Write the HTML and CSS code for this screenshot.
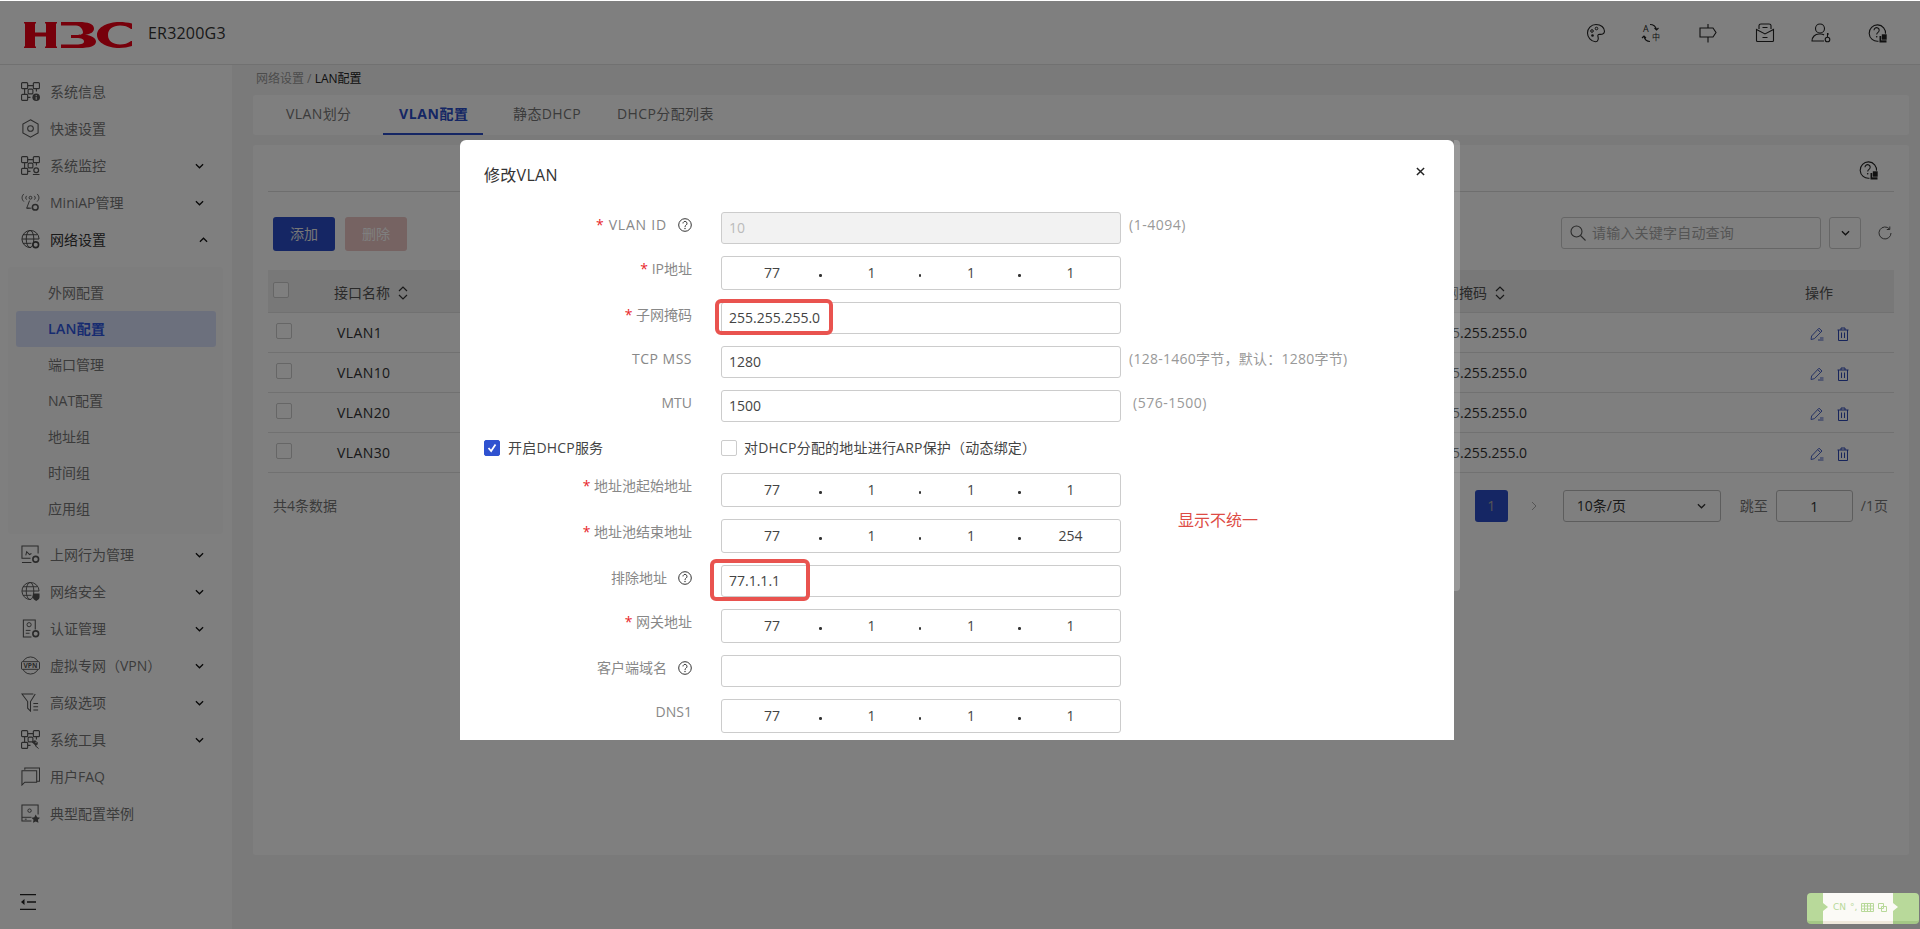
FILE: index.html
```html
<!DOCTYPE html>
<html lang="zh-CN">
<head>
<meta charset="utf-8">
<title>ER3200G3 - LAN配置</title>
<link rel="stylesheet" href="styles.css">
</head>
<body>
<svg class="defs" width="0" height="0" aria-hidden="true">
  <symbol id="grid" viewBox="0 0 20 20"><g fill="none" stroke="currentColor" stroke-width="1.200"><rect x=".6" y=".6" width="6.400" height="6.400" rx="1"/><rect x="13" y=".6" width="6.400" height="6.400" rx="1"/><rect x=".6" y="13" width="6.400" height="6.400" rx="1"/><rect x="7.500" y="7.500" width="5" height="5" rx="1"/><path d="M7 3.800h6M3.800 7v6M16.200 7v3M7 16.200h3"/></g></symbol>
  <symbol id="help" viewBox="0 0 14 14"><circle cx="7" cy="7" r="6.300" fill="none" stroke="currentColor" stroke-width="1"/><path d="M5 5.400a2 2 0 1 1 3.200 1.600c-.8.600-1.200 1-1.200 1.900" fill="none" stroke="currentColor" stroke-width="1"/><circle cx="7" cy="10.500" r=".7" fill="currentColor"/></symbol>
  <symbol id="helpcopy" viewBox="0 0 20 20"><path d="M11.500 18.200a8.200 8.200 0 1 1 7-7" fill="none" stroke="currentColor" stroke-width="1.100"/><path d="M7 7.200a2.600 2.600 0 1 1 4 2.200c-1 .7-1.300 1.100-1.300 2.100" fill="none" stroke="currentColor" stroke-width="1.100"/><circle cx="9.700" cy="13.800" r=".8" fill="currentColor"/><rect x="12.500" y="13" width="7" height="6.500" fill="currentColor"/><rect x="14.500" y="11" width="5.500" height="6" fill="currentColor" stroke="#fff" stroke-width=".6"/></symbol>
  <symbol id="edit" viewBox="0 0 14 14"><path d="M1 12.500l.6-3.500L9 1.200l3 2.800-7.600 7.700z M7.800 2.700l2.800 2.800M8 13h5.500M10 11h3.500" fill="none" stroke="currentColor" stroke-width="1"/></symbol>
  <symbol id="trash" viewBox="0 0 12 14"><path d="M.5 3h11M4 3V1h4v2M1.500 3v10.500h9V3M4.500 5.500v5.500M7.500 5.500v5.500" fill="none" stroke="currentColor" stroke-width="1"/></symbol>
  <symbol id="sort" viewBox="0 0 10 14"><path d="M1 5l4-4 4 4M1 9l4 4 4-4" fill="none" stroke="currentColor" stroke-width="1.200"/></symbol>
  <symbol id="down" viewBox="0 0 10 6"><path d="M1 1l4 4 4-4" fill="none" stroke="currentColor" stroke-width="1.400"/></symbol>
  <symbol id="up" viewBox="0 0 10 6"><path d="M1 5l4-4 4 4" fill="none" stroke="currentColor" stroke-width="1.400"/></symbol>
</svg>

<div class="topline"></div>
<div class="app">
  <header class="topbar">
    <svg class="logo" viewBox="0 0 108 26" aria-label="H3C"><path fill="#ee0016" d="M0 0h12v1l-1 1v8.500h11V2l-1-1V0h12v1l-1 1v22l1 1v1H21v-1l1-1v-9.500H11V24l1 1v1H0v-1l1-1V2L0 1z"/><path fill="#ee0016" d="M37 0h18c9 0 15 2 15 6.500 0 3.500-3 5.500-9 6.200 6 .8 11 3 11 6.800 0 4.500-6 6.500-17 6.500H37v-3.500h15c6 0 8-1 8-3s-2-3.500-8-3.500h-5v-3h5c5 0 7-1 7-2.800S57 3.500 52 3.500H37z"/><path fill="#ee0016" d="M108 1.500V7h-1c-3-2.500-7-3.500-11-3.500-7 0-12 3.500-12 9.500s5 9.500 12 9.500c4 0 8-1 11-3.500h1v5c-4 1.300-8 2-13 2-11 0-22-5-22-13S84 0 95 0c5 0 9 .5 13 1.500z"/></svg>
    <span class="model">ER3200G3</span>
    <div class="top-icons">
      <svg class="top-icon" viewBox="0 0 20 20"><path d="M10 1.500c5 0 8.500 3 8.500 6.800 0 3-3 3.200-5 3-1.500 0-2 1.200-1.500 2.500.6 1.500.3 5-2.500 5C5 18.500 1.500 14.500 1.500 10S5 1.500 10 1.500z" fill="none" stroke="currentColor" stroke-width="1.100"/><circle cx="6" cy="8" r="1.300" fill="none" stroke="currentColor"/><circle cx="10.500" cy="5.500" r="1.300" fill="none" stroke="currentColor"/><circle cx="6.500" cy="12.500" r="1.300" fill="currentColor"/></svg>
      <svg class="top-icon" viewBox="0 0 20 20"><text x="1" y="8.500" class="svg-a">A</text><text x="10" y="17" class="svg-z">中</text><path d="M8 1.500c3 0 5.500 1.500 6.500 5M12.500 5l2 2 2-2M8 18.500c-3 0-5-1-6-5M0 15l2-2 2 2" fill="none" stroke="currentColor" stroke-width="1.100"/></svg>
      <svg class="top-icon" viewBox="0 0 20 20"><path d="M10 1v4M10 14v5.500M2 5h13l3 4.500-3 4.500H2z" fill="none" stroke="currentColor" stroke-width="1.100"/></svg>
      <svg class="top-icon" viewBox="0 0 20 20"><path d="M4 6V2.500C4 1.500 5 1 6 1h8c1 0 2 .5 2 1.500V6M1.500 6.500L10 11l8.500-4.500v11c0 .5-.5 1-1 1h-15c-.5 0-1-.5-1-1zM7.500 4.500h5M7.500 14.500h5" fill="none" stroke="currentColor" stroke-width="1.100"/></svg>
      <svg class="top-icon" viewBox="0 0 20 20"><circle cx="9" cy="5.500" r="4.500" fill="none" stroke="currentColor" stroke-width="1.100"/><path d="M13 18H1c0-4 3-7 7-7h2c1.500 0 2 .4 3 1" fill="none" stroke="currentColor" stroke-width="1.100"/><circle cx="16.500" cy="16.500" r="2.300" fill="none" stroke="currentColor" stroke-width="1.100"/><path d="M16.500 14v-4M16.500 11h1.500" fill="none" stroke="currentColor" stroke-width="1.100"/></svg>
      <svg class="top-icon" viewBox="0 0 20 20"><use href="#helpcopy"/></svg>
    </div>
  </header>

  <div class="body">
    <nav class="sidebar">
      <div class="menu-item"><svg class="mi" viewBox="0 0 20 20"><use href="#grid"/><circle cx="16" cy="16" r="4" fill="currentColor"/><path d="M16 13.800v.9M16 15.600v3" stroke="#fff" stroke-width="1.100"/></svg><span>系统信息</span></div>
      <div class="menu-item"><svg class="mi" viewBox="0 0 20 20"><path d="M10 .8l8 4.600v9.200L10 19.200l-8-4.600V5.400z" fill="none" stroke="currentColor" stroke-width="1.100"/><circle cx="10" cy="10" r="3" fill="none" stroke="currentColor" stroke-width="1.100"/></svg><span>快速设置</span></div>
      <div class="menu-item"><svg class="mi" viewBox="0 0 20 20"><use href="#grid"/><circle cx="16" cy="15" r="2.500" fill="none" stroke="currentColor" stroke-width="1.300"/><path d="M12.500 19.500h7" stroke="currentColor" stroke-width="1.200"/></svg><span>系统监控</span><svg class="chev"><use href="#down"/></svg></div>
      <div class="menu-item"><svg class="mi" viewBox="0 0 20 20"><path d="M3 1C.5 3.500.5 6.500 3 9M17 1c2.500 2.500 2.500 5.500 0 8M6 3c-1.300 1.500-1.300 3 0 4M14 3c1.300 1.500 1.300 3 0 4" fill="none" stroke="currentColor" stroke-width="1"/><circle cx="10" cy="5" r="1.500" fill="none" stroke="currentColor"/><path d="M9 8l-3 8h5M6 16h3" fill="none" stroke="currentColor"/><circle cx="15" cy="15" r="3" fill="none" stroke="currentColor" stroke-width="1.600"/></svg><span>MiniAP管理</span><svg class="chev"><use href="#down"/></svg></div>
      <div class="menu-item menu-open"><svg class="mi" viewBox="0 0 20 20"><g fill="none" stroke="currentColor" stroke-width="1"><path d="M10.500 18.500A9 9 0 1 1 19 9.500"/><ellipse cx="9.500" cy="9.500" rx="4" ry="9"/><path d="M1 9.500h18M2 5h15M2 14h9"/></g><circle cx="15.500" cy="15.500" r="3" fill="none" stroke="currentColor" stroke-width="1.700"/></svg><span>网络设置</span><svg class="chev chev-up"><use href="#up"/></svg></div>

      <div class="submenu">
        <div class="sub-item">外网配置</div>
        <div class="sub-item sub-active">LAN配置</div>
        <div class="sub-item">端口管理</div>
        <div class="sub-item">NAT配置</div>
        <div class="sub-item">地址组</div>
        <div class="sub-item">时间组</div>
        <div class="sub-item">应用组</div>
      </div>

      <div class="menu-item menu-after"><svg class="mi" viewBox="0 0 20 20"><path d="M10 14H1V1h17v8M1 18.500h10M5 11l1-4 3 3 2-1" fill="none" stroke="currentColor" stroke-width="1.100"/><circle cx="15.500" cy="15" r="3" fill="none" stroke="currentColor" stroke-width="1.700"/></svg><span>上网行为管理</span><svg class="chev"><use href="#down"/></svg></div>
      <div class="menu-item"><svg class="mi" viewBox="0 0 20 20"><g fill="none" stroke="currentColor" stroke-width="1"><path d="M10.500 18.500A9 9 0 1 1 19 9.500"/><ellipse cx="9.500" cy="9.500" rx="4" ry="9"/><path d="M1 9.500h18M2 5h15M2 14h9"/></g><path d="M12.500 12h7v4c0 2-2 3-3.500 4-1.500-1-3.500-2-3.500-4z" fill="currentColor"/></svg><span>网络安全</span><svg class="chev"><use href="#down"/></svg></div>
      <div class="menu-item"><svg class="mi" viewBox="0 0 20 20"><path d="M11 19H2.500V1H15v10" fill="none" stroke="currentColor" stroke-width="1.100"/><circle cx="8.500" cy="6" r="2.200" fill="none" stroke="currentColor"/><path d="M5 12h5M5 15h4" stroke="currentColor"/><circle cx="15.500" cy="15.500" r="3" fill="none" stroke="currentColor" stroke-width="1.700"/></svg><span>认证管理</span><svg class="chev"><use href="#down"/></svg></div>
      <div class="menu-item"><svg class="mi" viewBox="0 0 20 20"><circle cx="10" cy="10" r="9" fill="none" stroke="currentColor" stroke-width="1"/><rect x=".5" y="6" width="19" height="8" rx="1" fill="#fff" stroke="currentColor"/><text x="10" y="12.500" class="svg-vpn">VPN</text></svg><span>虚拟专网（VPN）</span><svg class="chev"><use href="#down"/></svg></div>
      <div class="menu-item"><svg class="mi" viewBox="0 0 20 20"><path d="M13 1H1l6 8v7l3 3V9l5-8M13 11h5M13 14.500h5M13 18h5" fill="none" stroke="currentColor" stroke-width="1.100"/></svg><span>高级选项</span><svg class="chev"><use href="#down"/></svg></div>
      <div class="menu-item"><svg class="mi" viewBox="0 0 20 20"><use href="#grid"/><path d="M12 13.500a2.500 2.500 0 0 1 4-1.500l-1.500 1.500 1 1 1.500-1.500a2.500 2.500 0 0 1-2 3.500l3.500 3" fill="currentColor" stroke="currentColor"/></svg><span>系统工具</span><svg class="chev"><use href="#down"/></svg></div>
      <div class="menu-item"><svg class="mi" viewBox="0 0 20 20"><path d="M4 3V1h15.500v14H17M1 4h15.500v12H4l-3 3z" fill="none" stroke="currentColor" stroke-width="1.100"/></svg><span>用户FAQ</span></div>
      <div class="menu-item"><svg class="mi" viewBox="0 0 20 20"><path d="M11 18H1V1h17v10" fill="none" stroke="currentColor" stroke-width="1.100"/><circle cx="9" cy="7" r="1.800" fill="none" stroke="currentColor"/><path d="M1 14h10M4 16h2" stroke="currentColor"/><path d="M15.500 11l1.500 3 3 .4-2.200 2.200.6 3.200-2.900-1.500-2.900 1.500.6-3.200-2.200-2.200 3-.4z" fill="currentColor"/></svg><span>典型配置举例</span></div>

      <div class="collapse"><svg class="collapse-icon" viewBox="0 0 16 16"><path d="M0 .5h16M0 15.500h16M7 8h9" fill="none" stroke="currentColor" stroke-width="1.300"/><path d="M4.500 5v6L1 8z" fill="currentColor"/></svg></div>
    </nav>

    <main class="main">
      <div class="crumb"><span class="crumb-dim">网络设置 / </span>LAN配置</div>
      <div class="tabs">
        <span class="tab tab-1">VLAN划分</span>
        <span class="tab tab-on">VLAN配置</span>
        <span class="tab tab-3">静态DHCP</span>
        <span class="tab tab-4">DHCP分配列表</span>
      </div>
      <section class="card">
        <div class="card-head"><svg class="card-help" viewBox="0 0 20 20"><use href="#helpcopy"/></svg></div>
        <div class="toolbar">
          <button class="btn btn-primary">添加</button>
          <button class="btn btn-disabled">删除</button>
          <div class="search">
            <svg class="search-icon" viewBox="0 0 16 16"><circle cx="6.500" cy="6.500" r="5.500" fill="none" stroke="currentColor" stroke-width="1.100"/><path d="M10.500 10.500l5 5" stroke="currentColor" stroke-width="1.100"/></svg>
            <span>请输入关键字自动查询</span>
          </div>
          <div class="drop"><svg class="chev-s"><use href="#down"/></svg></div>
          <svg class="refresh" viewBox="0 0 14 14"><path d="M11.500 3a6 6 0 1 0 1.500 4M11.800 .5v3h-3" fill="none" stroke="currentColor" stroke-width="1"/></svg>
        </div>
        <div class="table">
          <div class="tr th">
            <div class="c-check"><span class="cb cb-head"></span></div>
            <div class="c-name">接口名称<svg class="sort"><use href="#sort"/></svg></div>
            <div class="c-mask">子网掩码<svg class="sort"><use href="#sort"/></svg></div>
            <div class="c-op">操作</div>
          </div>
          <div class="tr"><div class="c-check"><span class="cb"></span></div><div class="c-name c-val">VLAN1</div><div class="c-mask c-val">255.255.255.0</div><div class="c-op"><svg class="op-edit"><use href="#edit"/></svg><svg class="op-del"><use href="#trash"/></svg></div></div>
          <div class="tr"><div class="c-check"><span class="cb"></span></div><div class="c-name c-val">VLAN10</div><div class="c-mask c-val">255.255.255.0</div><div class="c-op"><svg class="op-edit"><use href="#edit"/></svg><svg class="op-del"><use href="#trash"/></svg></div></div>
          <div class="tr"><div class="c-check"><span class="cb"></span></div><div class="c-name c-val">VLAN20</div><div class="c-mask c-val">255.255.255.0</div><div class="c-op"><svg class="op-edit"><use href="#edit"/></svg><svg class="op-del"><use href="#trash"/></svg></div></div>
          <div class="tr"><div class="c-check"><span class="cb"></span></div><div class="c-name c-val">VLAN30</div><div class="c-mask c-val">255.255.255.0</div><div class="c-op"><svg class="op-edit"><use href="#edit"/></svg><svg class="op-del"><use href="#trash"/></svg></div></div>
        </div>
        <div class="pager">
          <span class="total">共4条数据</span>
          <span class="page-on">1</span>
          <svg class="page-next" viewBox="0 0 6 10"><path d="M1 1l4 4-4 4" fill="none" stroke="currentColor"/></svg>
          <div class="page-size"><span>10条/页</span><svg class="chev-s"><use href="#down"/></svg></div>
          <span class="jump">跳至</span>
          <div class="jump-box">1</div>
          <span class="pages">/1页</span>
        </div>
      </section>
    </main>
  </div>
</div>

<div class="overlay"></div>

<div class="modal-scroll"></div>
<div class="modal">
  <div class="modal-head">
    <h2 class="modal-title">修改VLAN</h2>
    <svg class="modal-close" viewBox="0 0 10 10"><path d="M1 1l8 8M9 1l-8 8" stroke="currentColor" stroke-width="1.600"/></svg>
  </div>
  <div class="form">
    <div class="row"><label class="lb"><i>*</i><span class="lb-vlan">VLAN ID</span><svg class="q"><use href="#help"/></svg></label><div class="inp inp-off">10</div><span class="hint">(1-4094)</span></div>
    <div class="row"><label class="lb"><i>*</i> IP地址</label><div class="inp ip"><span>77</span><b></b><span>1</span><b></b><span>1</span><b></b><span>1</span></div></div>
    <div class="row"><label class="lb"><i>*</i> 子网掩码</label><div class="inp">255.255.255.0</div></div>
    <div class="row"><label class="lb"><span class="lb-tcp">TCP MSS</span></label><div class="inp">1280</div><span class="hint hint-long">(128-1460字节，默认：1280字节)</span></div>
    <div class="row"><label class="lb">MTU</label><div class="inp">1500</div><span class="hint hint-wide">(576-1500)</span></div>
    <div class="row row-check">
      <div class="check-left"><span class="cb cb-on"><svg viewBox="0 0 16 16"><path d="M4 8l3 3.500L12 4" fill="none" stroke="#fff" stroke-width="2"/></svg></span><span>开启DHCP服务</span></div>
      <div class="check-right"><span class="cb"></span><span>对DHCP分配的地址进行ARP保护（动态绑定）</span></div>
    </div>
    <div class="row"><label class="lb"><i>*</i> 地址池起始地址</label><div class="inp ip"><span>77</span><b></b><span>1</span><b></b><span>1</span><b></b><span>1</span></div></div>
    <div class="row"><label class="lb"><i>*</i> 地址池结束地址</label><div class="inp ip"><span>77</span><b></b><span>1</span><b></b><span>1</span><b></b><span>254</span></div></div>
    <div class="row"><label class="lb">排除地址<svg class="q"><use href="#help"/></svg></label><div class="inp">77.1.1.1</div></div>
    <div class="row"><label class="lb"><i>*</i> 网关地址</label><div class="inp ip"><span>77</span><b></b><span>1</span><b></b><span>1</span><b></b><span>1</span></div></div>
    <div class="row"><label class="lb">客户端域名<svg class="q"><use href="#help"/></svg></label><div class="inp"></div></div>
    <div class="row"><label class="lb">DNS1</label><div class="inp ip"><span>77</span><b></b><span>1</span><b></b><span>1</span><b></b><span>1</span></div></div>
  </div>
  <div class="mark mark-mask"></div>
  <div class="mark mark-exclude"></div>
  <div class="note">显示不统一</div>
</div>

<div class="ime">
  <div class="ime-mid">
    <span class="ime-cn">CN</span>
    <span class="ime-dot">°,</span>
    <svg class="ime-kb" viewBox="0 0 13 9"><path d="M.5.500h12v8H.5zM.5 3h12M.5 6h12M3.500.500v8M6.500.500v8M9.500.500v8" fill="none" stroke="currentColor"/></svg>
    <svg class="ime-win" viewBox="0 0 9 9"><path d="M.5.500h5v5h-5zM3.500 3.500h5v5h-5z" fill="none" stroke="currentColor"/></svg>
  </div>
</div>
</body>
</html>
```
FILE: styles.css
```css
* { box-sizing: border-box; }
html, body { margin: 0; height: 100%; overflow: hidden; }
body {
  width: 1920px;
  height: 929px;
  position: relative;
  background: #fff;
  color: #444;
  font: 14px/20px "Open Sans", "Noto Sans CJK SC", sans-serif;
}
.defs { position: absolute; }
.topline { height: 1px; background: #fff; }
.app { height: 928px; display: flex; flex-direction: column; background: #f5f5f5; }

/* top bar */
.topbar { height: 64px; flex: none; display: flex; align-items: center; background: #fff; border-bottom: 1px solid #e2e2e2; padding-left: 24px; }
.logo { width: 108px; height: 26px; margin-top: 4px; }
.model { margin-left: 16px; font-size: 16px; letter-spacing: .2px; color: #333; }
.top-icons { margin-left: auto; display: flex; gap: 36.200px; padding-right: 33px; color: #222; }
.top-icon { width: 20px; height: 20px; display: block; overflow: visible; }
.svg-a { font: 9px "Open Sans", sans-serif; fill: currentColor; }
.svg-z { font: 8px "Noto Sans CJK SC", sans-serif; fill: currentColor; }
.svg-vpn { font: 700 7px "Open Sans", sans-serif; fill: currentColor; text-anchor: middle; }

.body { flex: 1; display: flex; min-height: 0; }

/* sidebar */
.sidebar { width: 232px; flex: none; background: #fff; padding-top: 8px; display: flex; flex-direction: column; color: #777; }
.menu-item { height: 37px; flex: none; display: flex; align-items: center; padding: 0 28px 0 21px; }
.menu-item span { margin-left: 10px; }
.menu-open { color: #333; }
.menu-after { margin-top: 2px; }
.mi { width: 19px; height: 19px; flex: none; color: #555; }
.menu-open .mi { color: #444; }
.chev { width: 9px; height: 6px; margin-left: auto; color: #111; }
.chev-up { margin-right: -4px; }
.submenu { margin: 9px 9px 0 8px; padding: 8px 0 7px; background: #fafafa; border-radius: 3px; }
.sub-item { height: 36px; line-height: 36px; margin: 0 7px 0 8px; padding-left: 32px; color: #777; border-radius: 3px; }
.sub-active { background: #d9e1fb; color: #2f56e0; font-weight: 600; letter-spacing: .3px; }
.collapse { margin-top: auto; padding: 0 0 19px 20px; color: #222; }
.collapse-icon { width: 16px; height: 16px; display: block; }

/* main */
.main { flex: 1; min-width: 0; padding: 0 11px 0 21px; display: flex; flex-direction: column; }
.crumb { height: 30px; padding: 4px 3px 0; font-size: 12px; color: #222; }
.crumb-dim { color: #999; }
.tabs { height: 40px; flex: none; background: #fff; border-radius: 3px; display: flex; padding-left: 33px; }
.tab { height: 40px; line-height: 37px; color: #777; letter-spacing: .4px; white-space: nowrap; }
.tab-1 { width: 97px; }
.tab-on { width: 100px; padding-left: 16px; color: #2a4cc8; font-weight: 700; letter-spacing: .6px; border-bottom: 2px solid #2a4cc8; }
.tab-3 { margin-left: 30px; width: 104px; }

.card { margin-top: 10px; height: 710px; background: #fff; border-radius: 3px; padding: 0 15px; }
.card-head { height: 47px; border-bottom: 1px solid #ddd; display: flex; align-items: center; justify-content: flex-end; padding: 4px 16px 0 0; }
.card-help { width: 20px; height: 20px; color: #222; }
.toolbar { display: flex; align-items: center; margin-top: 25px; padding: 0 1px 0 5px; height: 34px; }
.btn { width: 62px; height: 34px; border: 0; border-radius: 3px; font: inherit; padding: 0; }
.btn-primary { background: #2a4cc8; color: #eee; }
.btn-disabled { margin-left: 10px; background: #ecc6c4; color: #fff; }
.search { margin-left: auto; width: 260px; height: 32px; border: 1px solid #ccc; border-radius: 3px; display: flex; align-items: center; padding-left: 8px; color: #aaa; margin-top: -2px; }
.search span { margin-left: 6px; letter-spacing: .2px; }
.search-icon { width: 16px; height: 16px; color: #555; }
.drop { width: 32px; height: 32px; margin: -2px 0 0 8px; border: 1px solid #ccc; border-radius: 3px; display: flex; align-items: center; justify-content: center; color: #222; }
.chev-s { width: 9px; height: 6px; }
.refresh { width: 14px; height: 14px; margin: -2px 1px 0 17px; color: #555; }

.table { margin-top: 19px; }
.tr { display: flex; height: 40px; align-items: center; border-bottom: 1px solid #e2e2e2; }
.th { height: 43px; padding-top: 3px; background: #f0f0f0; color: #555; }
.c-check { width: 66px; flex: none; padding-left: 8px; }
.c-name { width: 1097px; flex: none; display: flex; align-items: center; }
.c-mask { width: 374px; flex: none; display: flex; align-items: center; }
.c-op { flex: 1; display: flex; align-items: center; }
.c-val { padding-left: 3px; color: #333; }
.c-name.c-val { letter-spacing: .4px; }
.c-mask.c-val { padding-left: 5px; }
.cb { display: block; width: 16px; height: 16px; border: 1px solid #ccc; border-radius: 2px; background: #fff; flex: none; }
.tr .cb { margin-top: -3px; }
.th .cb-head { margin: -6px 0 0 -3px; }
.sort { width: 10px; height: 14px; margin-left: 8px; color: #333; }
.op-edit { width: 14px; height: 14px; margin: 3px 0 0 5px; color: #4a63c8; }
.op-del { width: 12px; height: 14px; margin: 3px 0 0 13px; color: #2f4bb8; }

.pager { margin-top: 17px; height: 32px; display: flex; align-items: center; padding: 0 6px 0 5px; color: #555; }
.total { color: #777; margin-top: -1px; }
.page-on { margin-left: auto; width: 33px; height: 32px; line-height: 32px; text-align: center; background: #2a4cc8; color: #aaa; border-radius: 3px; }
.page-next { width: 6px; height: 10px; margin-left: 23px; color: #aaa; }
.page-size { margin-left: 26px; width: 158px; height: 32px; border: 1px solid #bbb; border-radius: 3px; display: flex; align-items: center; justify-content: space-between; padding: 0 14px 0 13px; color: #333; }
.jump { margin-left: 19px; color: #777; }
.jump-box { margin-left: 8px; width: 77px; height: 32px; line-height: 32px; text-align: center; border: 1px solid #bbb; border-radius: 3px; color: #333; }
.pages { margin-left: 8px; color: #777; }

/* overlay + modal */
.overlay { position: absolute; left: 0; right: 0; top: 1px; bottom: 0; background: rgba(0, 0, 0, .5); }
.modal-scroll { position: absolute; left: 1454px; top: 140px; width: 6px; height: 451px; border-radius: 0 4px 4px 0; background: rgba(255, 255, 255, .2); }
.modal { position: absolute; left: 460px; top: 140px; width: 994px; height: 600px; overflow: hidden; background: #fff; border-radius: 6px 6px 0 0; }
.modal-head { height: 72px; padding: 24px 24px 0; position: relative; }
.modal-title { margin: 0; font-size: 16px; line-height: 22px; font-weight: 400; letter-spacing: .3px; color: #333; }
.modal-close { position: absolute; left: 956px; top: 27px; width: 9px; height: 9px; color: #222; }
.row { display: flex; margin-bottom: 12px; padding-left: 24px; align-items: flex-start; }
.lb { width: 208px; flex: none; line-height: 26px; text-align: right; color: #888; display: flex; align-items: center; justify-content: flex-end; white-space: pre; }
.lb i { font-style: normal; color: #e8262a; }
.lb-vlan { margin-left: 5px; letter-spacing: .8px; }
.lb-tcp { letter-spacing: .5px; }
.q { width: 14px; height: 14px; margin-left: 11px; color: #333; }
.inp { width: 400px; height: 32px; margin-left: 29px; border: 1px solid #ccc; border-radius: 3px; padding: 0 7px; line-height: 30px; color: #444; flex: none; }
.inp-off { background: #f2f2f2; color: #bbb; }
.ip { height: 34px; display: flex; line-height: 32px; padding: 0 0 0 6px; }
.ip span { width: 88px; text-align: center; }
.ip b { width: 2.500px; height: 2.500px; border-radius: 50%; background: #333; margin: 17px 6px 0 3px; flex: none; }
.hint { margin-left: 8px; line-height: 26px; letter-spacing: .5px; color: #999; }
.hint-long { letter-spacing: .25px; }
.hint-wide { margin-left: 12px; }
.row-check { height: 27px; align-items: center; letter-spacing: .2px; }
.check-left { width: 237px; display: flex; align-items: center; }
.check-right { display: flex; align-items: center; }
.check-left > span:last-child { margin-left: 8px; color: #444; }
.check-right > span:last-child { margin-left: 7px; color: #444; }
.cb-on { background: #2f52d0; border-color: #2f52d0; padding: 0; }
.cb-on svg { display: block; width: 14px; height: 14px; }
.mark { position: absolute; border: 4px solid #e9534f; border-radius: 6px; }
.mark-mask { left: 255px; top: 159px; width: 118px; height: 36px; }
.mark-exclude { left: 250px; top: 419px; width: 100px; height: 42px; }
.note { position: absolute; left: 718px; top: 370px; font-size: 16px; color: #dd4b44; }

/* IME */
.ime { position: absolute; left: 1807px; top: 893px; width: 112px; height: 31px; background: #b8d99a; border-bottom: 3px solid #a4c786; border-radius: 4px; padding: 0 26px 0 16px; }
.ime-mid { height: 28px; position: relative; background: #fbfaf6; box-shadow: 0 3px 0 #efe9dc; display: flex; align-items: center; gap: 4px; padding-left: 10px; color: #b8d99a; }
.ime-mid::before { content: ""; position: absolute; left: 0; top: 10px; border: 4px solid transparent; border-left: 5px solid #b8d99a; }
.ime-mid::after { content: ""; position: absolute; left: 100%; top: 10px; border: 4px solid transparent; border-left: 5px solid #fbfaf6; }
.ime-cn { font: 9px/10px "DejaVu Sans", sans-serif; }
.ime-dot { font: 9px/10px "DejaVu Sans", sans-serif; }
.ime-kb { width: 13px; height: 9px; }
.ime-win { width: 9px; height: 9px; }
```
